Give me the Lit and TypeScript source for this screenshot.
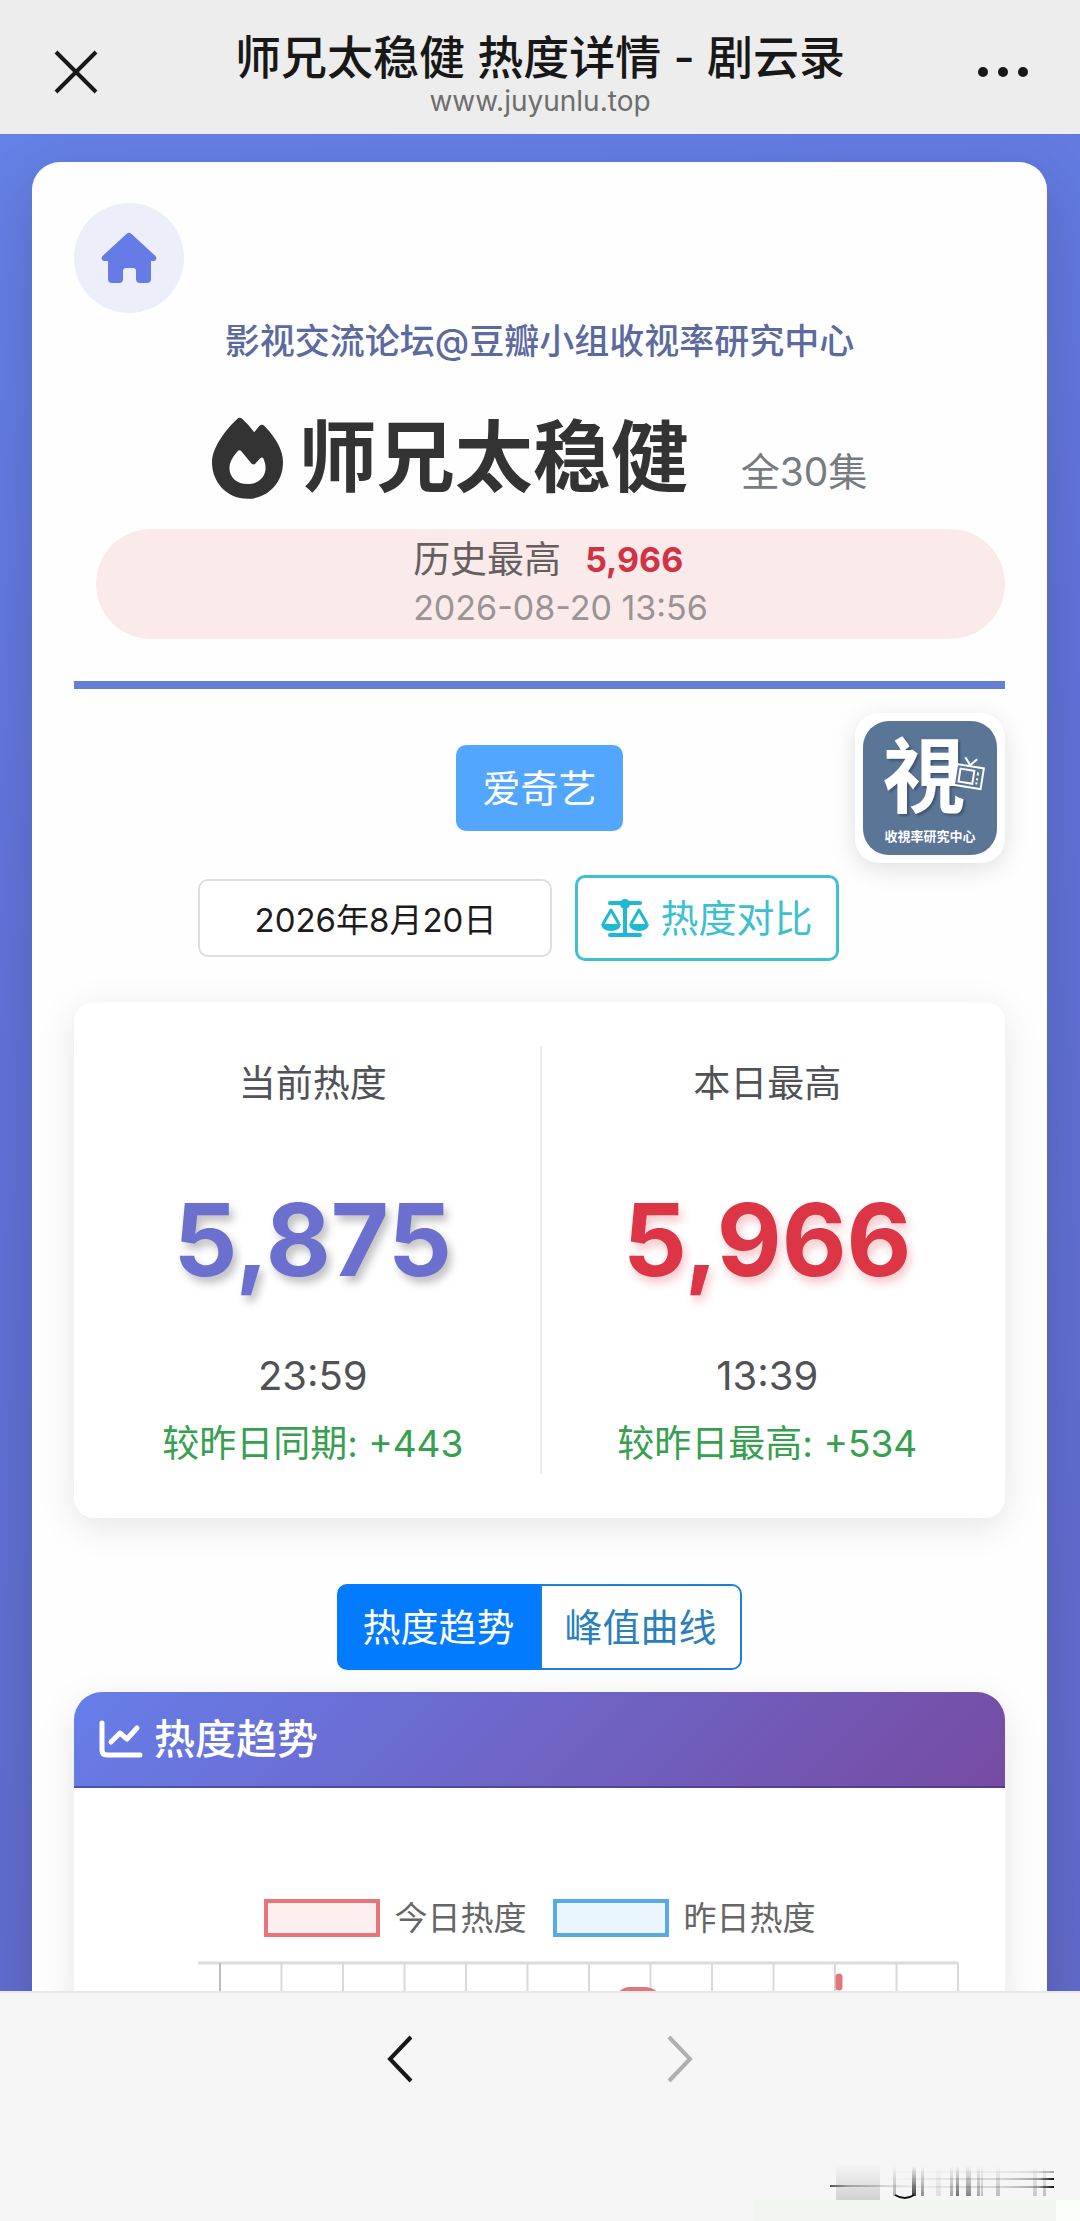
import { LitElement, html, svg, css } from "lit";
import { customElement, property, state } from "lit/decorators.js";

const GRID_COLUMNS = Array.from({ length: 13 }, (_, i) => 22 + i * 61.5);

@customElement("stat-panel")
export class StatPanel extends LitElement {
  @property() label = "";
  @property() value = "";
  @property() time = "";
  @property() delta = "";
  @property({ reflect: true }) tone = "violet";

  static styles = css`
    :host {
      display: flex;
      flex-direction: column;
      align-items: center;
      color: #505256;
      white-space: nowrap;
    }
    .label {
      font-size: 37px;
      line-height: 76px;
    }
    .value {
      margin-top: 58px;
      font-size: 100px;
      font-weight: 700;
      line-height: 120px;
      color: #6b70cf;
      text-shadow: 4px 6px 8px rgba(0, 0, 0, 0.25);
    }
    :host([tone="red"]) .value {
      color: #dc3545;
      text-shadow: 3px 6px 10px rgba(220, 53, 69, 0.28);
    }
    .time {
      margin-top: 46px;
      font-size: 40px;
      line-height: 60px;
    }
    .delta {
      margin-top: 8px;
      font-size: 37px;
      line-height: 60px;
      color: #36a04f;
    }
  `;

  render() {
    return html`
      <div class="label">${this.label}</div>
      <div class="value">${this.value}</div>
      <div class="time">${this.time}</div>
      <div class="delta">${this.delta}</div>
    `;
  }
}

@customElement("app-root")
export class AppRoot extends LitElement {
  @state() private tab = 0;

  static styles = css`
    :host {
      display: flex;
      flex-direction: column;
      height: 100vh;
      font-family: Inter, "Noto Sans CJK SC", sans-serif;
      color: #333;
      background: #f6f6f6;
    }
    * {
      box-sizing: border-box;
    }
    button,
    input {
      font: inherit;
      margin: 0;
    }
    button {
      cursor: pointer;
      white-space: nowrap;
    }
    svg {
      display: block;
      flex: none;
      overflow: visible;
    }
    .topbar {
      flex: none;
      display: grid;
      grid-template-columns: 132px 1fr 132px;
      align-items: center;
      padding: 30px 0 16px;
      background: #ededed;
    }
    .icon-button {
      display: flex;
      justify-content: center;
      padding: 10px 12px 14px;
      border: 0;
      background: none;
    }
    .heading {
      text-align: center;
      white-space: nowrap;
    }
    .page-title {
      margin: 0;
      font-size: 46px;
      font-weight: 500;
      line-height: 54px;
      color: #181818;
    }
    .address {
      font-size: 28px;
      line-height: 34px;
      color: #6e6e6e;
    }
    .viewport {
      flex: 1;
      min-height: 0;
      overflow-y: auto;
      scrollbar-width: none;
      padding: 28px 33px 0 32px;
      background: linear-gradient(160deg, #6580e6 0%, #6073d8 40%, #626bca 100%);
    }
    .sheet {
      padding: 41px 42px 60px;
      border-radius: 28px;
      background: #fefefe;
      box-shadow: 0 20px 60px rgba(0, 0, 0, 0.16);
    }
    .home {
      display: flex;
      align-items: center;
      justify-content: center;
      width: 110px;
      height: 110px;
      border-radius: 50%;
      background: #eceffa;
    }
    .forum {
      margin: 0;
      text-align: center;
      font-size: 35px;
      font-weight: 500;
      line-height: 56px;
      color: #5c6a9f;
    }
    .drama {
      display: flex;
      align-items: baseline;
      justify-content: center;
      margin: 33px 0 15px;
      line-height: 112px;
      white-space: nowrap;
    }
    .flame {
      align-self: center;
      margin-right: 16px;
    }
    .name {
      margin: 0;
      font-size: 78px;
      font-weight: 700;
    }
    .episodes {
      margin-left: 52px;
      font-size: 39px;
      line-height: 60px;
      color: #787b80;
    }
    .record {
      display: flex;
      justify-content: center;
      margin-left: 22px;
      padding: 7px 0 7px 20px;
      border-radius: 55px;
      background: #faeaea;
      line-height: 48px;
    }
    .record-line {
      display: flex;
      gap: 24px;
      font-size: 37px;
      color: #665f61;
    }
    .record-value {
      font-size: 34px;
      font-weight: 700;
      color: #cf3346;
    }
    .record-time {
      font-size: 34px;
      color: #999495;
    }
    .intro {
      padding-bottom: 42px;
      border-bottom: 8px solid #667ed5;
    }
    .controls {
      position: relative;
      display: flex;
      flex-direction: column;
      align-items: center;
      gap: 44px;
      padding-top: 56px;
    }
    .platform {
      padding: 0 26px;
      border: 0;
      border-radius: 10px;
      background: #52a6fe;
      color: #fff;
      font-size: 38px;
      line-height: 86px;
    }
    .logo {
      position: absolute;
      top: 24px;
      right: 0;
      padding: 8px;
      border-radius: 24px;
      background: #fff;
      box-shadow: 0 6px 24px rgba(0, 0, 0, 0.12);
    }
    .logo-glyph {
      filter: drop-shadow(2px 2px 1px #3f5674);
    }
    .filters {
      display: flex;
      align-items: center;
      gap: 23px;
      padding-right: 42px;
    }
    .date {
      width: 354px;
      height: 78px;
      border: 2px solid #dcdee4;
      border-radius: 10px;
      background: #fff;
      color: #1c1c1c;
      text-align: center;
      font-size: 33px;
    }
    .compare {
      display: flex;
      align-items: center;
      gap: 11px;
      padding: 0 23px;
      border: 3px solid #3fc1d3;
      border-radius: 10px;
      background: #fff;
      color: #3dbfd0;
      font-size: 38px;
      line-height: 80px;
    }
    .stats {
      display: grid;
      grid-template-columns: 1fr 1fr;
      margin-top: 41px;
      padding: 44px 12px;
      border-radius: 20px;
      background: #fff;
      box-shadow: 0 8px 36px rgba(0, 0, 0, 0.1);
    }
    .stats > :last-child {
      border-left: 2px solid #ebebed;
    }
    .tabs {
      display: flex;
      justify-content: center;
      margin-top: 66px;
    }
    .tab {
      padding: 0 23px;
      border: 2px solid #1c7fdc;
      background: #fff;
      color: #2a80ba;
      font-size: 38px;
      line-height: 82px;
    }
    .tab:first-child {
      border-radius: 10px 0 0 10px;
    }
    .tab:last-child {
      border-radius: 0 10px 10px 0;
    }
    .tab[aria-selected="true"] {
      border-color: #037bff;
      background: #037bff;
      color: #fff;
    }
    .chart {
      margin-top: 22px;
      border-radius: 28px;
      background: #fff;
      box-shadow: 0 10px 36px rgba(0, 0, 0, 0.1);
    }
    .chart-head {
      display: flex;
      align-items: center;
      gap: 11px;
      padding: 0 25px;
      border-bottom: 2px solid rgba(50, 40, 110, 0.5);
      border-radius: 28px 28px 0 0;
      background: linear-gradient(135deg, #667eea 0%, #764ba2 100%);
      color: #fff;
    }
    .chart-title {
      margin: 0;
      font-size: 41px;
      font-weight: 500;
      line-height: 94px;
    }
    .legend {
      display: flex;
      justify-content: center;
      gap: 26px;
      margin-top: 105px;
      font-size: 33px;
      line-height: 50px;
      color: #666;
    }
    .legend-item {
      display: flex;
      align-items: center;
      gap: 15px;
    }
    .swatch {
      width: 116px;
      height: 38px;
      border: 4px solid #ea7379;
      background: #fdeeef;
    }
    .swatch-past {
      border-color: #58a9e8;
      background: #ebf5fd;
    }
    .plot {
      width: 100%;
      height: auto;
      margin-top: 18px;
    }
    .bottombar {
      flex: none;
      position: relative;
      display: flex;
      justify-content: center;
      gap: 230px;
      height: 230px;
      padding-top: 32px;
      border-top: 2px solid #e6e8e8;
      background: #f6f6f6;
    }
    .nav {
      align-self: flex-start;
    }
    .mark {
      position: absolute;
      right: 0;
      bottom: 0;
    }
  `;

  private renderLogo() {
    return html`
      <svg width="134" height="134" viewBox="0 0 134 134" role="img" aria-label="收視率研究中心">
        <rect width="134" height="134" rx="26" fill="#5b7597" />
        <g font-family="'Noto Sans CJK TC', sans-serif" text-anchor="middle">
          <text class="logo-glyph" x="61" y="85" font-size="82" font-weight="700" fill="#fff">視</text>
          <text x="67" y="120" font-size="13" font-weight="700" fill="#fff">收視率研究中心</text>
        </g>
        <g transform="rotate(9 105 58)" fill="#5b7597" stroke="#fff" stroke-width="2">
          <path d="M99 37l6 7 6-7" fill="none" />
          <rect x="92" y="45" width="27" height="21" />
          <rect x="96" y="49" width="14" height="13" />
          <path d="M114 50v3M114 56v2M114 60v2" />
        </g>
      </svg>
    `;
  }

  private renderPlot() {
    return html`
      <svg class="plot" viewBox="0 0 931 60" aria-hidden="true">
        <path d="M124 2H884" stroke="#dcdcdc" stroke-width="3" />
        ${GRID_COLUMNS.map(
          (x, i) => svg`<path d=${`M${124 + x} 2V60`} stroke=${i ? "#d9d9d9" : "#bdbdbd"} stroke-width="2" />`
        )}
        <path d="M546 34q4-5 10-5h14q8 0 12 5" fill="#e0777b" stroke="#e0777b" stroke-width="6" />
        <path d="M765 16V26" stroke="#e0777b" stroke-width="7" stroke-linecap="round" />
      </svg>
    `;
  }

  private renderMark() {
    const bars: [number, number, number, number][] = [
      [74, 3, 56, 0.3],
      [93, 4, 56, 0.8],
      [102, 3, 56, 0.45],
      [117, 5, 56, 0.1],
      [131, 3, 56, 0.35],
      [137, 3, 56, 0.6],
      [147, 5, 56, 0.5],
      [158, 3, 56, 0.35],
      [162, 2, 56, 0.25],
      [177, 4, 56, 0.25],
      [214, 4, 56, 0.2],
      [224, 3, 56, 0.25],
    ];
    return html`
      <svg class="mark" width="330" height="81" viewBox="-70 0 330 81" aria-hidden="true">
        <defs>
          <linearGradient id="fall" x1="0" y1="0" x2="0" y2="1">
            <stop offset="0" stop-color="#111" stop-opacity="0" />
            <stop offset="1" stop-color="#111" />
          </linearGradient>
          <linearGradient id="lead" x1="0" y1="0" x2="1" y2="0">
            <stop offset="0" stop-color="#111" stop-opacity="0" />
            <stop offset="0.7" stop-color="#111" stop-opacity="0.15" />
            <stop offset="0.9" stop-color="#111" stop-opacity="0.35" />
            <stop offset="1" stop-color="#111" />
          </linearGradient>
          <linearGradient id="tail" x1="1" y1="0" x2="0" y2="0">
            <stop offset="0" stop-color="#111" stop-opacity="0" />
            <stop offset="0.8" stop-color="#111" stop-opacity="0.3" />
            <stop offset="1" stop-color="#111" stop-opacity="0.7" />
          </linearGradient>
        </defs>
        <rect x="-67" y="60" width="303" height="21" fill="#f1f6f0" />
        <rect x="236" y="60" width="24" height="21" fill="#fbfefa" />
        <rect x="16" y="24" width="44" height="36" fill="url(#fall)" opacity="0.16" />
        ${bars.map(
          ([x, w, bottom, o]) =>
            svg`<rect x=${x - 1} y="26" width=${w} height=${bottom - 26} fill="url(#fall)" opacity=${o} />`
        )}
        <path d="M75 55q10 6 19 0" fill="none" stroke="#111" stroke-width="2" />
        <rect x="60" y="31" width="174" height="2" fill="url(#lead)" opacity="0.35" />
        <rect x="60" y="38" width="174" height="2" fill="url(#lead)" />
        <rect x="60" y="46" width="174" height="2" fill="url(#lead)" />
        <rect x="10" y="45" width="90" height="2" fill="url(#tail)" />
      </svg>
    `;
  }

  render() {
    return html`
      <header class="topbar">
        <button class="icon-button" aria-label="关闭">
          <svg width="44" height="44" viewBox="0 0 44 44">
            <path d="M12 2l40 40M52 2L12 42" stroke="#181818" stroke-width="4" fill="none" />
          </svg>
        </button>
        <div class="heading">
          <h1 class="page-title">师兄太稳健 热度详情 - 剧云录</h1>
          <div class="address">www.juyunlu.top</div>
        </div>
        <button class="icon-button" aria-label="更多">
          <svg width="80" height="44" viewBox="0 0 80 44" fill="#181818">
            <circle cx="9" cy="22" r="5" />
            <circle cx="29" cy="22" r="5" />
            <circle cx="49" cy="22" r="5" />
          </svg>
        </button>
      </header>

      <main class="viewport">
        <div class="sheet">
          <section class="intro">
            <a class="home" href="#" aria-label="首页">
              <svg width="56" height="52" viewBox="0 0 56 52" fill="#667be6">
                <path
                  d="M26 1.500q2-1.500 4 0L54.500 24q1.500 2 .5 3.500-.8 1.500-2.500 1.500H50v18q0 4-4 4H39q-4 0-4-4V39q0-3-3-3h-7q-3 0-3 3v8q0 4-4 4H11q-4 0-4-4V29H3.500Q1.800 29 1 27.500 0 26 1.500 24z"
                />
              </svg>
            </a>
            <p class="forum">影视交流论坛@豆瓣小组收视率研究中心</p>
            <div class="drama">
              <svg class="flame" width="71" height="82" viewBox="0 0 212 244" fill="#333">
                <path
                  fill-rule="evenodd"
                  d="M76 5q7-7 14 0 20 18 36 40l16-19q7-7 14 0 56 58 56 109c0 62-46 109-106 109S0 196 0 135C0 96 34 44 76 5zM77 101q-25 28-25 50c0 30 23 49 54 49s54-20 54-49q0-12-6-27-4-7-10-1l-15 16q-6 5-12-1l-30-37q-5-5-10 0z"
                />
              </svg>
              <h2 class="name">师兄太稳健</h2>
              <span class="episodes">全30集</span>
            </div>
            <div class="record">
              <div>
                <div class="record-line">
                  <span>历史最高</span>
                  <strong class="record-value">5,966</strong>
                </div>
                <div class="record-time">2026-08-20 13:56</div>
              </div>
            </div>
          </section>

          <section class="controls">
            <button class="platform">爱奇艺</button>
            <div class="logo">${this.renderLogo()}</div>
            <div class="filters">
              <input class="date" type="text" aria-label="日期" .value=${"2026年8月20日"} />
              <button class="compare">
                <svg width="48" height="40" viewBox="0 0 48 40" fill="#1fb9d3">
                  <rect x="7" y="3" width="34" height="4" rx="2" />
                  <circle cx="24" cy="6" r="5" />
                  <rect x="22" y="6" width="4" height="31" />
                  <rect x="7" y="35" width="34" height="4" rx="2" />
                  <path d="M0 26h20q-1 7-10 7T0 26zM28 26h20q-1 7-10 7t-10-7z" />
                  <path
                    d="M2 26l8-14 8 14M30 26l8-14 8 14"
                    fill="none"
                    stroke="#1fb9d3"
                    stroke-width="3"
                    stroke-linejoin="round"
                  />
                </svg>
                热度对比
              </button>
            </div>
          </section>

          <section class="stats">
            <stat-panel label="当前热度" value="5,875" time="23:59" delta="较昨日同期: +443"></stat-panel>
            <stat-panel tone="red" label="本日最高" value="5,966" time="13:39" delta="较昨日最高: +534"></stat-panel>
          </section>

          <div class="tabs" role="tablist">
            ${["热度趋势", "峰值曲线"].map(
              (name, i) => html`<button
                class="tab"
                role="tab"
                aria-selected=${this.tab === i ? "true" : "false"}
                @click=${() => (this.tab = i)}
              >
                ${name}
              </button>`
            )}
          </div>

          <section class="chart">
            <div class="chart-head">
              <svg
                width="44"
                height="38"
                viewBox="0 0 44 38"
                fill="none"
                stroke="#fff"
                stroke-width="5"
                stroke-linecap="round"
                stroke-linejoin="round"
              >
                <path d="M3 3V30q0 5 5 5H41" />
                <path d="M12 22l9-9 7 6L38 8" />
              </svg>
              <h3 class="chart-title">热度趋势</h3>
            </div>
            <div class="legend">
              <div class="legend-item"><span class="swatch"></span>今日热度</div>
              <div class="legend-item"><span class="swatch swatch-past"></span>昨日热度</div>
            </div>
            ${this.renderPlot()}
          </section>
        </div>
      </main>

      <footer class="bottombar">
        <button class="icon-button nav" aria-label="后退">
          <svg width="26" height="48" viewBox="0 0 26 48" fill="none" stroke="#181818" stroke-width="4">
            <path d="M24 2L3 24l21 22" />
          </svg>
        </button>
        <button class="icon-button nav" aria-label="前进" disabled>
          <svg width="26" height="48" viewBox="0 0 26 48" fill="none" stroke="#b0b0b0" stroke-width="4">
            <path d="M2 2l21 22L2 46" />
          </svg>
        </button>
        ${this.renderMark()}
      </footer>
    `;
  }
}
